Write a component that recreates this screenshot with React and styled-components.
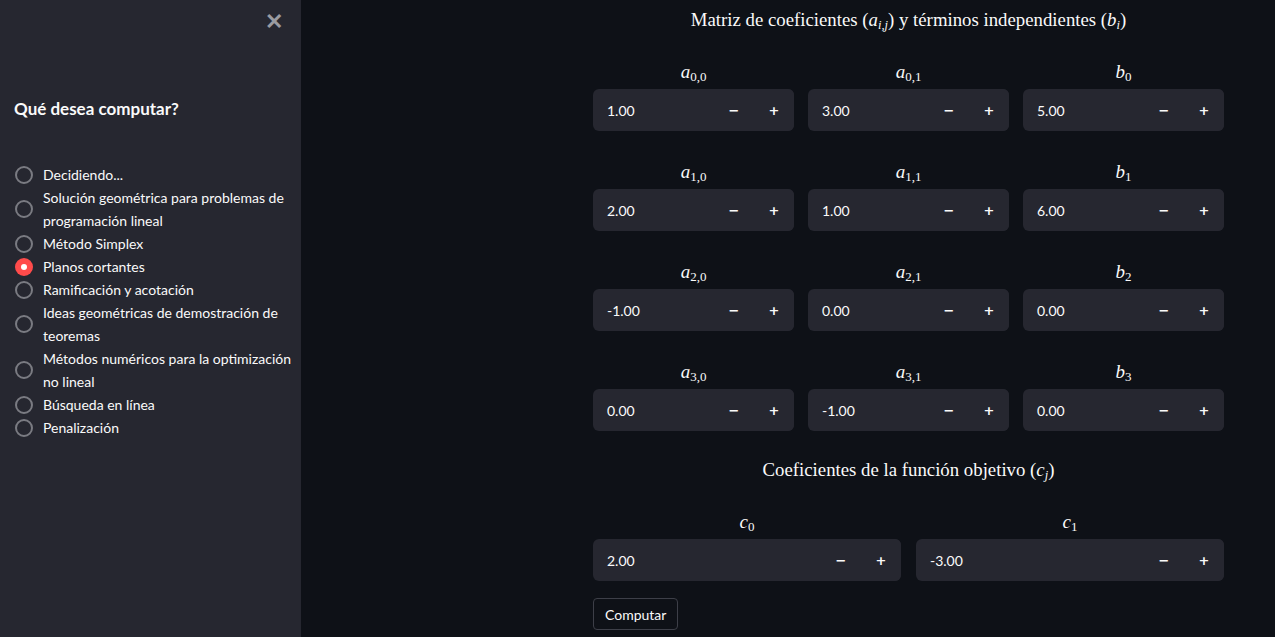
import React from 'react'
import styled, { createGlobalStyle } from 'styled-components'

const GlobalStyle = createGlobalStyle`
    html, body {
        margin: 0;
        padding: 0;
        background: #0e1117;
        font-family: Lato, "Noto Sans", sans-serif;
        color: #fafafa;
    }
`

const Shell = styled.div`
    display: flex;
    width: 1275px;
    height: 637px;
    overflow: hidden;
`

const Sidebar = styled.aside`
    width: 301px;
    flex-shrink: 0;
    background: #262730;
    position: relative;
    padding: 94px 8px 0 14px;
    box-sizing: border-box;
`

const CloseButton = styled.span`
    position: absolute;
    top: 9px;
    right: 18px;
    color: #9a9ba1;
    font-size: 22px;
    font-weight: 700;
    line-height: 24px;
`

const SidebarTitle = styled.h2`
    margin: 0 0 39px 0;
    font-size: 17px;
    font-weight: 700;
    line-height: 30px;
`

const RadioList = styled.div`
    display: flex;
    flex-direction: column;
`

const RadioItem = styled.label`
    display: flex;
    align-items: center;
    gap: 10px;
    padding-left: 1px;
    font-size: 14px;
    line-height: 23px;
    color: #fafafa;
`

const RadioDot = styled.span`
    width: 18px;
    height: 18px;
    flex-shrink: 0;
    border-radius: 50%;
    box-sizing: border-box;
    border: ${p => (p.checked ? 'none' : '2px solid #7a7b82')};
    background: ${p => (p.checked ? '#ff4b4b' : 'transparent')};
    display: flex;
    align-items: center;
    justify-content: center;

    &::after {
        content: '';
        display: ${p => (p.checked ? 'block' : 'none')};
        width: 6px;
        height: 6px;
        border-radius: 50%;
        background: #fff;
    }
`

const Main = styled.main`
    flex: 1;
    padding: 8px 0 0 292px;
`

const Content = styled.div`
    width: 631px;
    display: flex;
    flex-direction: column;
`

const MathTitle = styled.div`
    font-family: "Liberation Serif", "DejaVu Serif", serif;
    font-size: 18.8px;
    text-align: center;
    line-height: 24px;
    margin-top: ${p => p.top}px;
    margin-bottom: 26px;

    i { font-style: italic; }
    sub { font-size: 12.5px; line-height: 0; vertical-align: -3px; }
`

const Grid = styled.div`
    display: grid;
    grid-template-columns: repeat(${p => p.cols}, 1fr);
    column-gap: ${p => (p.cols === 2 ? 15 : 14)}px;
    row-gap: 27px;
`

const Field = styled.div`
    display: flex;
    flex-direction: column;
`

const FieldLabel = styled.div`
    font-family: "Liberation Serif", "DejaVu Serif", serif;
    font-size: 19px;
    font-style: italic;
    text-align: center;
    height: 28px;
    line-height: 28px;
    margin-bottom: 3px;

    sub {
        font-style: normal;
        font-size: 13px;
        line-height: 0;
        vertical-align: -3px;
    }
`

const NumberBox = styled.div`
    display: flex;
    height: 42px;
    background: #262730;
    border-radius: 6px;
    overflow: hidden;
`

const NumberValue = styled.div`
    flex: 1;
    display: flex;
    align-items: center;
    padding-left: 14px;
    font-size: 14px;
    color: #fafafa;
`

const StepButton = styled.button`
    width: 40px;
    border: none;
    background: #262730;
    color: #fafafa;
    font-family: "DejaVu Sans", sans-serif;
    font-size: 13px;
    font-weight: 700;
    padding: 0;
    display: flex;
    align-items: center;
    justify-content: center;
`

const ComputeButton = styled.button`
    align-self: flex-start;
    margin-top: 17px;
    height: 32px;
    padding: 0 11px;
    background: #0e1117;
    border: 1px solid #3d3f48;
    border-radius: 4px;
    color: #fafafa;
    font-family: Lato, "Noto Sans", sans-serif;
    font-size: 14px;
`

const options = [
    'Decidiendo...',
    'Solución geométrica para problemas de programación lineal',
    'Método Simplex',
    'Planos cortantes',
    'Ramificación y acotación',
    'Ideas geométricas de demostración de teoremas',
    'Métodos numéricos para la optimización no lineal',
    'Búsqueda en línea',
    'Penalización',
]

const matrix = [
    ['1.00', '3.00', '5.00'],
    ['2.00', '1.00', '6.00'],
    ['-1.00', '0.00', '0.00'],
    ['0.00', '-1.00', '0.00'],
]

const NumberInput = ({ label, value }) => (
    <Field>
        <FieldLabel>{label}</FieldLabel>
        <NumberBox>
            <NumberValue>{value}</NumberValue>
            <StepButton>−</StepButton>
            <StepButton>+</StepButton>
        </NumberBox>
    </Field>
)

const App = () => (
    <>
        <GlobalStyle />
        <Shell>
            <Sidebar>
                <CloseButton>✕</CloseButton>
                <SidebarTitle>Qué desea computar?</SidebarTitle>
                <RadioList>
                    {options.map(o => (
                        <RadioItem key={o}>
                            <RadioDot checked={o === 'Planos cortantes'} />
                            <span>{o}</span>
                        </RadioItem>
                    ))}
                </RadioList>
            </Sidebar>
            <Main>
                <Content>
                    <MathTitle top={0}>
                        Matriz de coeficientes (<i>a</i><sub><i>i,j</i></sub>) y términos independientes (<i>b</i><sub><i>i</i></sub>)
                    </MathTitle>
                    <Grid cols={3}>
                        {matrix.map((row, i) => row.map((v, j) => (
                            <NumberInput
                                key={`${i}-${j}`}
                                value={v}
                                label={j < 2
                                    ? <>a<sub>{i},{j}</sub></>
                                    : <>b<sub>{i}</sub></>}
                            />
                        )))}
                    </Grid>
                    <MathTitle top={27}>
                        Coeficientes de la función objetivo (<i>c</i><sub><i>j</i></sub>)
                    </MathTitle>
                    <Grid cols={2}>
                        <NumberInput label={<>c<sub>0</sub></>} value="2.00" />
                        <NumberInput label={<>c<sub>1</sub></>} value="-3.00" />
                    </Grid>
                    <ComputeButton>Computar</ComputeButton>
                </Content>
            </Main>
        </Shell>
    </>
)

export default App
